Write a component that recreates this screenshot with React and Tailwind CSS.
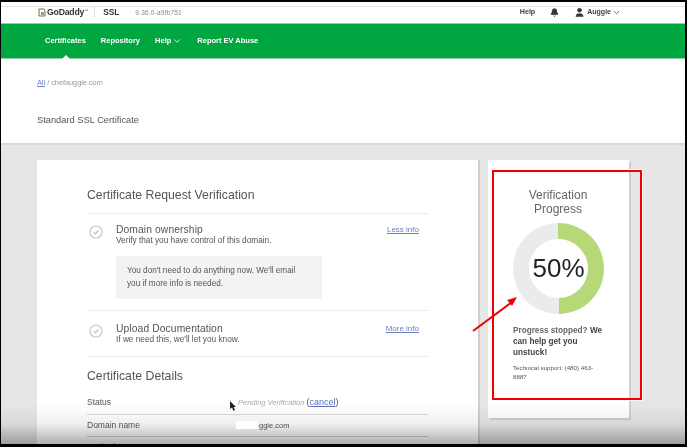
import { Bell, ChevronDown, User } from 'lucide-react'

const CheckCircle = () => (
  <svg width="14" height="14" viewBox="0 0 14 14" fill="none" className="ml-[2px] mt-[2px] shrink-0">
    <circle cx="7" cy="7" r="6" stroke="#c8c8c8" strokeWidth="1.2" />
    <path d="M4.6 7.2 L6.3 8.9 L9.5 5.3" stroke="#bdbdbd" strokeWidth="1.1" />
  </svg>
)

const VerifyRow = ({ title, sub, link, children, className }) => (
  <div className={`flex border-b border-[#ececec] ${className}`}>
    <div className="w-[29px] shrink-0">
      <CheckCircle />
    </div>
    <div className="flex-1">
      <p className="text-[10.3px] leading-[13px] tracking-[0.1px] text-[#555]">{title}</p>
      <p className="text-[8.25px] leading-[10px] text-[#555]">{sub}</p>
      {children}
    </div>
    <a className="mr-[9px] text-[8px] leading-[13px] text-[#6b7fc4] underline">{link}</a>
  </div>
)

export default function App() {
  return (
    <div className="relative h-[447px] w-[687px] overflow-hidden bg-black font-['Liberation_Sans',Arial,sans-serif]">
      <div className="ml-[1px] mt-[2px] flex h-[442px] w-[684px] flex-col overflow-hidden bg-[#e6e6e6] blur-[0.4px]">
        {/* top bar */}
        <div className="h-[4px] shrink-0 bg-white" />
        <header className="flex h-[17px] shrink-0 items-center border-t border-[#e4e4e4] bg-white pb-[5px] pl-[37px] pr-[64px]">
          <svg width="8" height="9" viewBox="0 0 8 9" className="mr-[1px]">
            <path d="M1 1 H6 L7 3 V8 H1 Z" fill="none" stroke="#7a6a55" strokeWidth="1" />
            <path d="M3 4 H6 V7 H3 Z" fill="#7fa885" />
          </svg>
          <span className="text-[8.7px] font-bold tracking-[-0.2px] text-[#333]">GoDaddy</span>
          <span className="mb-1 text-[4px] text-[#555]">™</span>
          <span className="ml-[6px] mr-[8px] h-[11px] w-px bg-[#ddd]" />
          <span className="text-[8.3px] font-bold text-[#333]">SSL</span>
          <span className="ml-[16px] text-[6.5px] tracking-[0.2px] text-[#888]">9.36.0-a9fb751</span>
          <span className="ml-auto text-[7.2px] font-bold text-[#444]">Help</span>
          <Bell size={9} className="ml-[15px] fill-[#333] text-[#333]" />
          <User size={11} className="ml-[15px] fill-[#333] text-[#333]" />
          <span className="ml-[2px] text-[7px] font-bold text-[#444]">Auggie</span>
          <ChevronDown size={9} className="ml-[1px] text-[#444]" />
        </header>

        {/* green nav */}
        <nav className="relative flex h-[36px] shrink-0 items-center gap-[15px] border-y border-[#8fd0a4] bg-[#00a63f] pl-[44px] text-[7.5px] font-bold text-white">
          <span>Certificates</span>
          <span>Repository</span>
          <span className="flex items-center gap-[1px]">
            Help <ChevronDown size={10} />
          </span>
          <span>Report EV Abuse</span>
          <span className="absolute bottom-[-1px] left-[61px] h-0 w-0 border-x-[4px] border-b-[4px] border-x-transparent border-b-white" />
        </nav>

        {/* page title */}
        <section className="h-[86px] shrink-0 border-b-2 border-[#d8d8d8] bg-white pl-[36px] pt-[19px]">
          <p className="text-[7.3px] leading-[9px] text-[#999]">
            <a className="text-[#6b7fc4] underline">All</a> / chefauggie.com
          </p>
          <p className="mt-[27px] text-[9.3px] leading-[12px] text-[#555]">Standard SSL Certificate</p>
        </section>

        {/* cards */}
        <div className="flex flex-1 items-start gap-[10px] pl-[36px] pt-[15px]">
          <main className="h-[300px] w-[441px] shrink-0 bg-white pl-[50px] pr-[50px] pt-[26px] shadow-[2px_0_0_#cfcfcf]">
            <h2 className="border-b border-[#ececec] pb-[9px] text-[12.25px] leading-[18px] text-[#555]">
              Certificate Request Verification
            </h2>
            <VerifyRow
              className="h-[97px] pt-[9px]"
              title="Domain ownership"
              sub="Verify that you have control of this domain."
              link="Less info"
            >
              <div className="mt-[10px] h-[43px] w-[206px] bg-[#f3f3f3] pl-[11px] pr-[18px] pt-[8px] text-[8.2px] leading-[13px] text-[#555]">
                You don't need to do anything now. We'll email you if more info is needed.
              </div>
            </VerifyRow>
            <VerifyRow
              className="h-[46px] pt-[11px]"
              title="Upload Documentation"
              sub="If we need this, we'll let you know."
              link="More info"
            />
            <h2 className="mt-[10px] text-[12.25px] leading-[18px] text-[#555]">Certificate Details</h2>
            <div className="mt-[6px] flex h-[24px] items-center border-b border-[#d9d9d9] text-[8.5px] text-[#555]">
              <span className="w-[151px]">Status</span>
              <span className="text-[7.5px] italic text-[#aaa]">Pending Verification</span>
              <span className="ml-[2px] text-[9px] text-[#555]">
                (<a className="text-[#5a6fb8] underline">cancel</a>)
              </span>
            </div>
            <div className="flex h-[22px] items-center border-b border-[#d0d0d0] text-[8.5px] text-[#555]">
              <span className="w-[172px]">Domain name</span>
              <span className="text-[7.5px]">ggie.com</span>
            </div>
            <div className="pt-[5px] text-[8.5px] leading-[10px] text-[#555]">Expiration Date</div>
          </main>

          <aside className="flex h-[258px] w-[141px] shrink-0 flex-col bg-white pl-[24px] pr-[25px] pt-[28px] shadow-[2px_2px_0_#cfcfcf]">
            <h3 className="text-center text-[12px] leading-[14px] text-[#666]">
              Verification
              <br />
              Progress
            </h3>
            <div className="relative ml-[1px] mt-[7px] h-[91px] w-[91px] shrink-0 rounded-full bg-[conic-gradient(#b7d878_0_50%,#ebebeb_50%_100%)]">
              <div className="absolute inset-[16px] flex items-center justify-center rounded-full bg-white text-[26px] text-[#222]">
                50%
              </div>
            </div>
            <p className="ml-[1px] mt-[11px] text-[8.2px] font-bold leading-[11px] text-[#444]">
              <span className="text-[#666]">Progress stopped?</span> We can help get you unstuck!
            </p>
            <p className="ml-[1px] mt-[5px] text-[6.2px] leading-[9px] text-[#555]">Technical support: (480) 463-8887</p>
          </aside>
        </div>
      </div>

      {/* video fade at the bottom */}
      <div className="pointer-events-none absolute inset-x-[1px] bottom-[3px] h-[40px] bg-gradient-to-b from-transparent via-[#00000010] to-[#00000050]" />

      {/* masked part of the domain */}
      <div className="absolute left-[236px] top-[421px] h-[8px] w-[22px] bg-white" />

      {/* annotation box and arrow */}
      <div className="pointer-events-none absolute left-[492px] top-[170px] h-[230px] w-[150px] border-2 border-[#f00000] shadow-[0_0_0_1px_#ffffff]" />
      <svg className="pointer-events-none absolute left-[470px] top-[292px]" width="50" height="40" viewBox="0 0 50 40" fill="none">
        <path d="M3 39 L42 10" stroke="#f00000" strokeWidth="2" />
        <path d="M47 5 L37 8 L42 14 Z" fill="#f00000" />
      </svg>

      {/* mouse pointer */}
      <svg className="pointer-events-none absolute left-[229px] top-[401px]" width="7" height="10" viewBox="0 0 7 10">
        <path d="M1 0 V8 L3 6.5 L4.5 10 L6 9 L4.6 6 H7 Z" fill="#222" />
      </svg>
    </div>
  )
}
